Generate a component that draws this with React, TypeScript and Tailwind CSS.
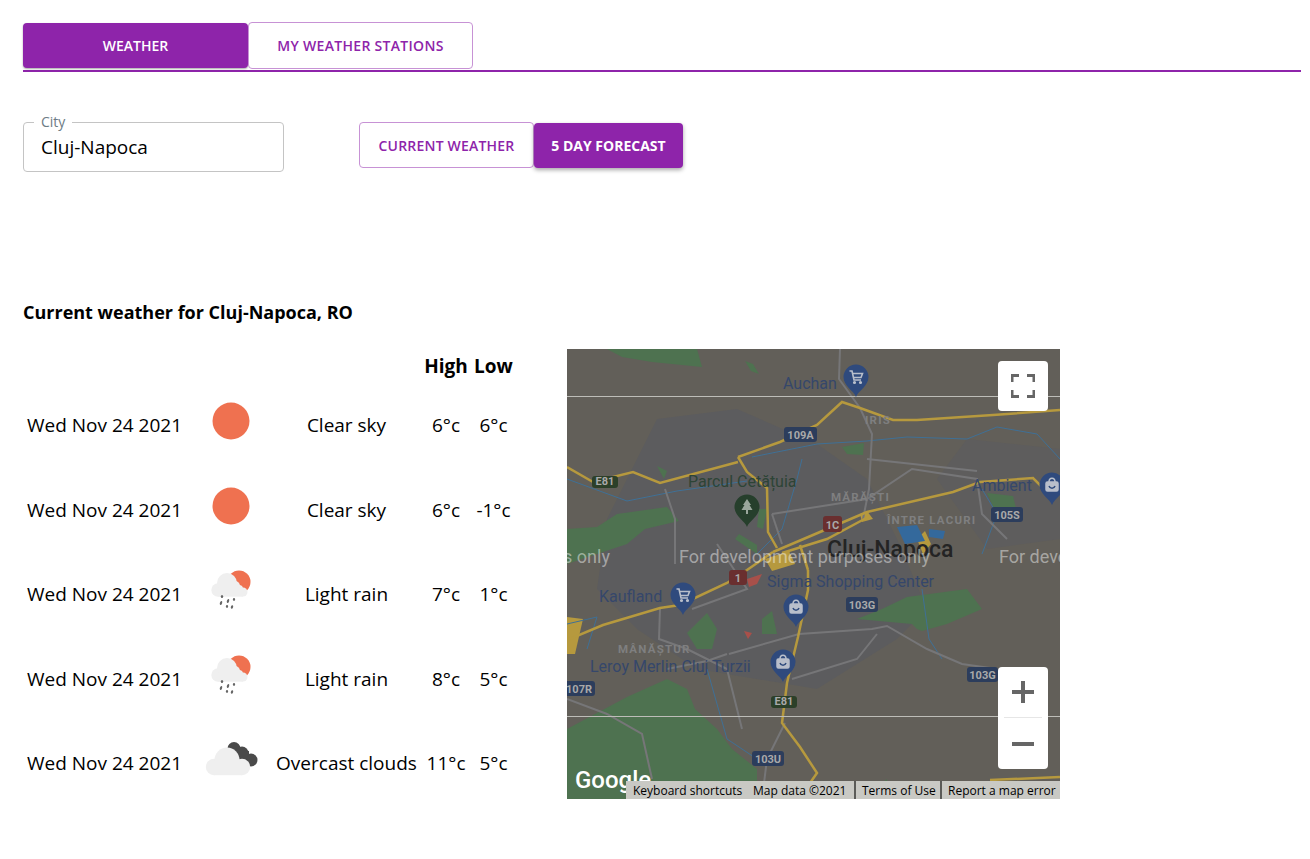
const rows = [
  { date: "Wed Nov 24 2021", icon: "sun", text: "Clear sky", high: "6°c", low: "6°c" },
  { date: "Wed Nov 24 2021", icon: "sun", text: "Clear sky", high: "6°c", low: "-1°c" },
  { date: "Wed Nov 24 2021", icon: "rain", text: "Light rain", high: "7°c", low: "1°c" },
  { date: "Wed Nov 24 2021", icon: "rain", text: "Light rain", high: "8°c", low: "5°c" },
  { date: "Wed Nov 24 2021", icon: "clouds", text: "Overcast clouds", high: "11°c", low: "5°c" },
];

function WeatherIcon({ type }: { type: string }) {
  return (
    <svg width="60" height="60" viewBox="0 0 60 60" className="-mt-2">
      {type === "sun" && <circle cx="30" cy="30" r="18.5" fill="#ef7150" />}
      {type === "rain" && (
        <g>
          <circle cx="38" cy="22" r="11.5" fill="#ef7150" />
          <g fill="#efefef">
            <circle cx="17" cy="30" r="6.7" />
            <circle cx="26" cy="23" r="10" />
            <circle cx="34" cy="26" r="5" />
            <circle cx="38" cy="29" r="4" />
            <circle cx="42" cy="32" r="4.5" />
            <rect x="17" y="28" width="25" height="8.7" />
          </g>
          <g fill="#666">
            <ellipse cx="21" cy="36.5" rx="1.2" ry="1.6" />
            <ellipse cx="20" cy="43" rx="1.1" ry="2" transform="rotate(20 20 43)" />
            <ellipse cx="27" cy="41" rx="1.1" ry="2" transform="rotate(20 27 41)" />
            <ellipse cx="26" cy="46.5" rx="1.1" ry="1.4" />
            <ellipse cx="33" cy="39.5" rx="1.1" ry="1.4" />
            <ellipse cx="31" cy="47" rx="1.1" ry="1.8" transform="rotate(20 31 47)" />
          </g>
        </g>
      )}
      {type === "clouds" && (
        <g>
          <g fill="#4a4a4a">
            <circle cx="33" cy="19.5" r="6.5" />
            <circle cx="41" cy="24" r="6.5" />
            <circle cx="50" cy="31" r="6.5" />
            <rect x="30" y="22" width="18" height="15" />
          </g>
          <g fill="#efefef">
            <circle cx="13" cy="38" r="8.2" />
            <circle cx="26" cy="31" r="12.5" />
            <circle cx="41" cy="38" r="8.2" />
            <rect x="13" y="36" width="28" height="10.2" />
          </g>
        </g>
      )}
    </svg>
  );
}

const greens = [
  "M40 0 L130 0 L135 18 L85 13 L55 8Z",
  "M178 12 L186 15 L192 25 L184 22Z",
  "M90 117 L100 122 L97 130 Z",
  "M50 165 L100 158 L112 172 L78 180 L60 195 L0 215 L0 180 L30 178Z",
  "M275 98 L297 94 L296 106 L280 105Z",
  "M420 144 L446 147 L450 163 L428 162Z",
  "M172 185 L190 196 L190 205 L168 190Z",
  "M190 178 L192 160 L200 160 L196 180Z",
  "M0 380 L60 348 L100 330 L120 340 L128 360 L150 380 L165 400 L190 420 L190 450 L70 450 L0 450Z",
  "M120 284 L140 264 L150 280 L145 300 L130 300Z",
  "M290 270 L315 260 L340 248 L400 240 L415 260 L380 275 L355 282 L350 280 L345 275Z",
  "M300 445 L320 430 L318 450 L296 450Z",
  "M195 270 L205 262 L210 285 L195 285Z",
];

const yellowRoads = [
  "M171 108 L213 93 L250 76 L275 53 L293 59 L326 71 L350 71 L426 66 L493 61",
  "M0 118 L26 133 L66 123 L93 134 L171 113",
  "M171 108 L180 123 L200 139 L201 183 L210 199",
  "M206 203 L253 183 L300 163 L386 143 L413 133 L466 129 L486 149",
  "M215 204 L260 190 L303 167",
  "M0 291 L36 276 L93 259 L113 256 L160 234 L180 221 L206 203",
  "M241 221 L241 241 L231 288 L220 334 L215 374 L233 398 L250 424 L243 434",
  "M233 196 L241 221",
  "M423 431 L493 428",
];

const grayRoads = [
  "M273 0 L272 30 L293 59 L305 85 L302 140 L296 170",
  "M205 165 L300 150 L345 120 L410 130 L415 165 L440 190",
  "M300 110 L410 122",
  "M98 140 L108 170 L108 215",
  "M205 165 L215 195",
  "M162 305 L232 285 L305 280 L320 277 L360 300 L395 315 L430 320",
  "M225 330 L290 310 L310 285",
  "M93 259 L92 290 L120 300 L160 320 L175 380",
  "M0 350 L40 365 L75 385 L85 430",
  "M160 305 L140 312 L100 320",
  "M218 374 L200 410 L195 450",
  "M150 195 L180 240 L125 260",
];

const rivers = [
  "M185 108 L250 95 L300 92 L340 88 L400 90 L430 78 L470 85 L493 110",
  "M0 130 L60 152 L110 142 L180 132",
  "M235 110 L230 130 L215 180 L190 205",
  "M415 140 L430 165 L415 205",
  "M0 275 L30 268 L20 300",
  "M140 320 L160 390 L190 410",
  "M355 240 L362 290 L375 310",
];

const shields = [
  { x: 217, y: 78, w: 33, h: 15, c: "#2c3d5c", t: "109A" },
  { x: 424, y: 158, w: 32, h: 15, c: "#2c3d5c", t: "105S" },
  { x: 279, y: 248, w: 32, h: 15, c: "#2c3d5c", t: "103G" },
  { x: 400, y: 318, w: 31, h: 15, c: "#2c3d5c", t: "103G" },
  { x: -4, y: 332, w: 32, h: 15, c: "#2c3d5c", t: "107R" },
  { x: 185, y: 402, w: 32, h: 15, c: "#2c3d5c", t: "103U" },
  { x: 25, y: 127, w: 26, h: 12, c: "#2c4029", t: "E81" },
  { x: 204, y: 347, w: 26, h: 12, c: "#2c4029", t: "E81" },
  { x: 256, y: 167, w: 19, h: 16, c: "#6a2f2f", t: "1C" },
  { x: 162, y: 221, w: 18, h: 15, c: "#6a2f2f", t: "1" },
];

const blueLabels = [
  { x: 216, y: 40, t: "Auchan" },
  { x: 405, y: 142, t: "Ambient" },
  { x: 32, y: 253, t: "Kaufland" },
  { x: 200, y: 238, t: "Sigma Shopping Center" },
  { x: 23, y: 323, t: "Leroy Merlin Cluj Turzii" },
];

const grayLabels = [
  { x: 264, y: 152, t: "MĂRĂȘTI" },
  { x: 298, y: 75, t: "IRIS" },
  { x: 320, y: 175, t: "ÎNTRE LACURI" },
  { x: 51, y: 304, t: "MÂNĂȘTUR" },
];

function Pin({ x, y, color = "#2f4a7d", kind }: { x: number; y: number; color?: string; kind: string }) {
  return (
    <g transform={`translate(${x} ${y})`}>
      <path d="M0 20 C-2 14 -12.5 9 -12.5 0 A12.5 12.5 0 1 1 12.5 0 C12.5 9 2 14 0 20Z" fill={color} />
      {kind === "cart" && (
        <g fill="none" stroke="#b9bfcb" strokeWidth="1.6">
          <path d="M-6.5 -6 L-4 -6 L-2 3 L5 3" />
          <path d="M-3.5 -3.5 L6.5 -3.5 L5 0.5 L-2.5 0.5" />
          <circle cx="-1.5" cy="5.5" r="0.8" />
          <circle cx="4.5" cy="5.5" r="0.8" />
        </g>
      )}
      {kind === "bag" && (
        <g fill="none" stroke="#b9bfcb" strokeWidth="1.5">
          <rect x="-6" y="-3" width="12" height="9" rx="1.5" fill="#b9bfcb" />
          <path d="M-3 -3 C-3 -8 3 -8 3 -3" />
          <path d="M-3 1 C-2 4 2 4 3 1" stroke="#2f4a7d" />
        </g>
      )}
      {kind === "tree" && <path d="M0 -8 L4 -2 L2.5 -2 L5.5 3 L1 3 L1 7 L-1 7 L-1 3 L-5.5 3 L-2.5 -2 L-4 -2Z" fill="#9aa79c" />}
    </g>
  );
}

function MapDrawing() {
  return (
    <svg viewBox="0 0 493 450" className="block h-full w-full font-['Roboto',sans-serif]">
      <rect width="493" height="450" fill="#625f59" />
      <path d="M90 70 L170 60 L250 95 L300 130 L330 190 L360 260 L330 290 L250 340 L130 320 L70 280 L30 240 L40 170Z" fill="#5c5c5e" />
      <path d="M400 90 L493 100 L493 190 L420 200 L370 130Z" fill="#5e5d5d" />
      {greens.map((d) => <path key={d} d={d} fill="#4e7250" />)}
      <path d="M0 268 L16 270 L8 305 L0 305Z" fill="#b6993e" />
      <path d="M198 210 L222 202 L228 215 L205 222Z" fill="#b6993e" />
      <path d="M293 165 L300 162 L306 170 L295 173Z" fill="#b6993e" />
      <path d="M350 190 L358 182 L364 195 L356 205Z" fill="#b6993e" />
      <path d="M330 178 L350 176 L358 192 L338 195Z" fill="#34699c" />
      <path d="M362 180 L378 182 L376 190 L362 188Z" fill="#34699c" />
      <path d="M180 230 L195 225 L190 235 L182 238Z" fill="#a8504a" />
      <path d="M177 282 L185 284 L181 290Z" fill="#a8504a" />
      {rivers.map((d) => <path key={d} d={d} fill="none" stroke="#3f7096" strokeWidth="1" />)}
      {grayRoads.map((d) => <path key={d} d={d} fill="none" stroke="#767678" strokeWidth="2" />)}
      {yellowRoads.map((d) => <path key={d} d={d} fill="none" stroke="#b6993e" strokeWidth="2.5" />)}
      <line x1="0" y1="47.5" x2="493" y2="47.5" stroke="#bdbdb8" />
      <line x1="0" y1="367.5" x2="493" y2="367.5" stroke="#bdbdb8" />
      {shields.map((s) => (
        <g key={s.x + s.t}>
          <rect x={s.x} y={s.y} width={s.w} height={s.h} rx="3" fill={s.c} />
          <text x={s.x + s.w / 2} y={s.y + s.h - 3.5} textAnchor="middle" fontSize="11" fontWeight="700" fill="#a9a9a9">{s.t}</text>
        </g>
      ))}
      {grayLabels.map((l) => (
        <text key={l.t} x={l.x} y={l.y} fontSize="11.5" fontWeight="700" letterSpacing="1.2" fill="#7f7f80">{l.t}</text>
      ))}
      {blueLabels.map((l) => (
        <text key={l.t} x={l.x} y={l.y} fontSize="16" fill="#35476b">{l.t}</text>
      ))}
      <text x="121" y="138" fontSize="16" fill="#2d4436">Parcul Cetățuia</text>
      <Pin x={289} y={28} kind="cart" />
      <Pin x={180} y={158} color="#263f2c" kind="tree" />
      <Pin x={485} y={136} kind="bag" />
      <Pin x={116} y={246} kind="cart" />
      <Pin x={229} y={258} kind="bag" />
      <Pin x={216} y={313} kind="bag" />
      <text x="260" y="208" fontSize="23" fontWeight="500" fill="#242424">Cluj-Napoca</text>
      <g fontSize="18" fill="#ffffff" fillOpacity="0.45">
        <text x="-208" y="214">For development purposes only</text>
        <text x="112" y="214">For development purposes only</text>
        <text x="432" y="214">For development purposes only</text>
      </g>
    </svg>
  );
}

function MapPanel() {
  return (
    <div className="relative ml-[52px] h-[450px] w-[493px] overflow-hidden">
      <MapDrawing />
      <span className="absolute left-[8px] top-[417px] font-['Roboto',sans-serif] text-[24px] font-medium leading-[28px] text-white">Google</span>
      <div className="absolute bottom-0 right-0 flex h-[18px] w-[434px] bg-[#5b5b58] text-[12px] leading-[20px] text-black">
        <div className="flex w-[228px] bg-[#c9c9c4] pl-[7px]">
          <span className="w-[120px] whitespace-nowrap">Keyboard shortcuts</span>
          <span className="whitespace-nowrap">Map data ©2021</span>
        </div>
        <div className="ml-[2px] w-[84px] whitespace-nowrap bg-[#c9c9c4] pl-[6px]">Terms of Use</div>
        <div className="ml-[2px] flex-1 whitespace-nowrap bg-[#c9c9c4] pl-[6px]">Report a map error</div>
      </div>
      <button className="absolute left-[431px] top-[12px] flex h-[50px] w-[50px] items-center justify-center rounded-sm bg-white">
        <svg width="24" height="24" viewBox="0 0 24 24" fill="none" stroke="#666666" strokeWidth="3">
          <path d="M1 8V1.5H8M16 1.5H23V8M23 16V22.5H16M8 22.5H1V16" />
        </svg>
      </button>
      <div className="absolute left-[431px] top-[318px] flex h-[102px] w-[50px] flex-col items-center rounded-sm bg-white">
        <button className="flex h-[50px] w-full items-center justify-center">
          <svg width="24" height="24" viewBox="0 0 24 24" fill="#666666">
            <path d="M10 1h4v9h9v4h-9v9h-4v-9H1v-4h9z" />
          </svg>
        </button>
        <div className="h-px w-[38px] bg-[#e6e6e6]" />
        <button className="flex h-[51px] w-full items-center justify-center">
          <svg width="24" height="24" viewBox="0 0 24 24" fill="#666666">
            <path d="M1 10h22v4H1z" />
          </svg>
        </button>
      </div>
    </div>
  );
}

export default function App() {
  return (
    <div className="min-h-[859px] bg-white pl-[23px] pr-[9px] pt-[22px] font-['Open_Sans',sans-serif] text-black">
      <div className="flex h-[47px]">
        <button className="mt-px h-[45px] w-[225px] rounded bg-[#8e24aa] text-[14px] font-semibold text-white shadow-[0_1px_2px_rgba(0,0,0,0.35)]">
          WEATHER
        </button>
        <button className="h-[47px] w-[225px] rounded border border-[#c792d5] bg-white text-[14px] font-semibold tracking-[0.3px] text-[#8e24aa]">
          MY WEATHER STATIONS
        </button>
      </div>
      <div className="mt-px h-[2px] bg-[#8e24aa]" />

      <div className="mt-[50px] flex items-start">
        <div className="relative flex h-[50px] w-[261px] items-center rounded border border-[#c4c4c4] pl-[17px] text-[19px]">
          <label className="absolute -top-[10px] left-[10px] bg-white px-[7px] text-[14px] leading-[18px] text-[#6d7c85]">City</label>
          Cluj-Napoca
        </div>
        <div className="ml-[75px] flex h-[46px] items-stretch">
          <button className="w-[175px] rounded border border-[#c792d5] bg-white text-[14px] font-semibold tracking-[0.2px] text-[#8e24aa]">
            CURRENT WEATHER
          </button>
          <button className="mt-px h-[45px] w-[149px] rounded bg-[#8e24aa] text-[14px] font-bold text-white shadow-[0_2px_4px_rgba(0,0,0,0.35)]">
            5 DAY FORECAST
          </button>
        </div>
      </div>

      <h2 className="mt-[128px] text-[18px] font-bold leading-[24px]">Current weather for Cluj-Napoca, RO</h2>

      <div className="mt-[25px] flex items-start">
        <div className="grid w-[492px] grid-cols-[165px_85px_147px_52px_43px] grid-rows-[34px_repeat(5,84.5px)] items-center text-[19px]">
          <div className="col-span-3" />
          <div className="text-center font-bold">High</div>
          <div className="text-center font-bold">Low</div>
          {rows.map((r, i) => (
            <div key={i} className="contents">
              <div className="whitespace-nowrap pl-1">{r.date}</div>
              <div className="flex justify-center"><WeatherIcon type={r.icon} /></div>
              <div className="whitespace-nowrap text-center">{r.text}</div>
              <div className="text-center">{r.high}</div>
              <div className="text-center">{r.low}</div>
            </div>
          ))}
        </div>
        <MapPanel />
      </div>
    </div>
  );
}
